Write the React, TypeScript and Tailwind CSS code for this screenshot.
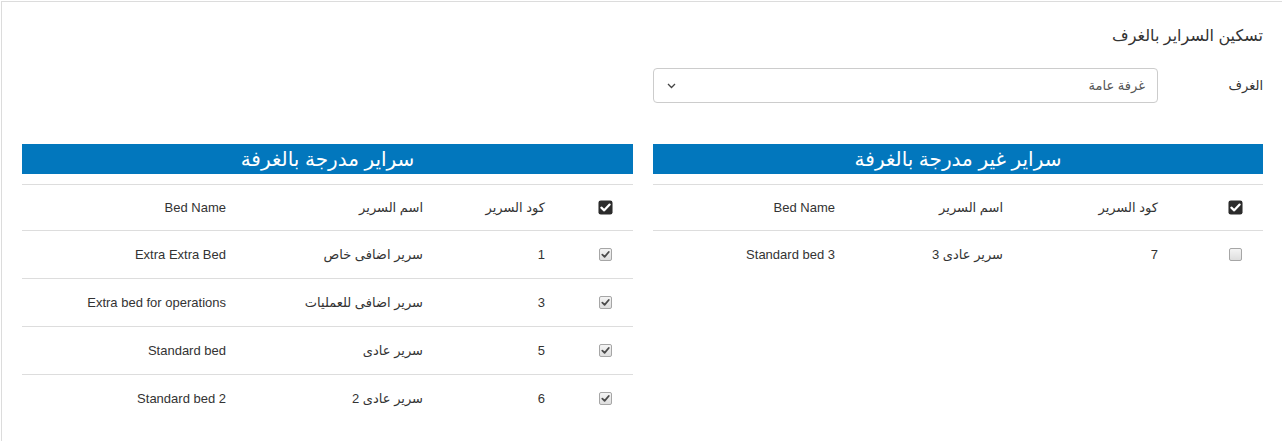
import React from 'react';

type Bed = { code: string; name: string; enName: string; checked: boolean };

const NOT_IN_ROOM: Bed[] = [
  { code: '7', name: 'سرير عادى 3', enName: 'Standard bed 3', checked: false },
];

const IN_ROOM: Bed[] = [
  { code: '1', name: 'سرير اضافى خاص', enName: 'Extra Extra Bed', checked: true },
  { code: '3', name: 'سرير اضافى للعمليات', enName: 'Extra bed for operations', checked: true },
  { code: '5', name: 'سرير عادى', enName: 'Standard bed', checked: true },
  { code: '6', name: 'سرير عادى 2', enName: 'Standard bed 2', checked: true },
];

function CheckSquare() {
  return (
    <svg width="15" height="15" viewBox="0 0 16 16">
      <rect x="0.5" y="0.5" width="15" height="15" rx="2.5" fill="#2b2b2b" />
      <path d="M3.6 8.2 L6.6 11 L12.4 4.9" fill="none" stroke="#fff" strokeWidth="2.4" strokeLinecap="round" strokeLinejoin="round" />
    </svg>
  );
}

function RowCheckbox({ checked }: { checked: boolean }) {
  return (
    <span className="inline-flex h-[13px] w-[13px] items-center justify-center rounded-[2px] border border-[#a6a6a6] bg-gradient-to-b from-[#f4f4f4] to-[#dedede]">
      {checked && (
        <svg width="9" height="9" viewBox="0 0 10 10">
          <path d="M1.5 5.2 L4 7.6 L8.6 2.2" fill="none" stroke="#4a4a4a" strokeWidth="2" strokeLinecap="round" strokeLinejoin="round" />
        </svg>
      )}
    </span>
  );
}

function Panel({ title, beds, widths }: { title: string; beds: Bed[]; widths: string[] }) {
  return (
    <div className="flex-1">
      <div className="flex h-[30px] items-center justify-center bg-[#0277bd] text-[20px] leading-none text-white">
        {title}
      </div>
      <div className="mt-[10px]">
        <div className="flex h-[46px] items-center border-t border-[#dddddd]">
          <div className={`${widths[0]} flex justify-start pr-[20px]`}>
            <CheckSquare />
          </div>
          <div className={`${widths[1]} pr-2`}>كود السرير</div>
          <div className={`${widths[2]} pr-2`}>اسم السرير</div>
          <div className={`${widths[3]} pr-2`}>Bed Name</div>
        </div>
        {beds.map((b) => (
          <div key={b.code} className="flex h-[48px] items-center border-t border-[#dddddd]">
            <div className={`${widths[0]} flex justify-start pr-[21px]`}>
              <RowCheckbox checked={b.checked} />
            </div>
            <div className={`${widths[1]} pr-2`}>{b.code}</div>
            <div className={`${widths[2]} pr-2`}>{b.name}</div>
            <div className={`${widths[3]} pr-2`}>{b.enName}</div>
          </div>
        ))}
      </div>
    </div>
  );
}

export default function App() {
  return (
    <div className="h-[441px] w-full overflow-hidden bg-white pl-px pt-px">
      <div
        dir="rtl"
        className="h-full border-l border-t border-[#dcdcdc] pl-[21px] pr-[19px] pt-[23px] font-['Liberation_Sans','DejaVu_Sans',sans-serif] text-[13px] text-[#333333]"
      >
        <h1 className="text-[16px] leading-[22px] font-normal">تسكين السراير بالغرف</h1>

        <div className="mt-[21px] flex items-center">
          <label className="w-[105px]">الغرف</label>
          <div className="flex h-[35px] w-[505px] items-center justify-between rounded-[4px] border border-[#cccccc] pl-[13px] pr-[12px] text-[#555555]">
            <span>غرفة عامة</span>
            <svg width="9" height="6" viewBox="0 0 9 6">
              <path d="M1 1 L4.5 4.5 L8 1" fill="none" stroke="#444" strokeWidth="1.3" />
            </svg>
          </div>
        </div>

        <div className="mt-[41px] flex gap-[20px]">
          <Panel
            title="سراير غير مدرجة بالغرفة"
            beds={NOT_IN_ROOM}
            widths={['w-[97px]', 'w-[155px]', 'w-[168px]', 'w-[190px]']}
          />
          <Panel
            title="سراير مدرجة بالغرفة"
            beds={IN_ROOM}
            widths={['w-[80px]', 'w-[122px]', 'w-[197px]', 'w-[212px]']}
          />
        </div>
      </div>
    </div>
  );
}
